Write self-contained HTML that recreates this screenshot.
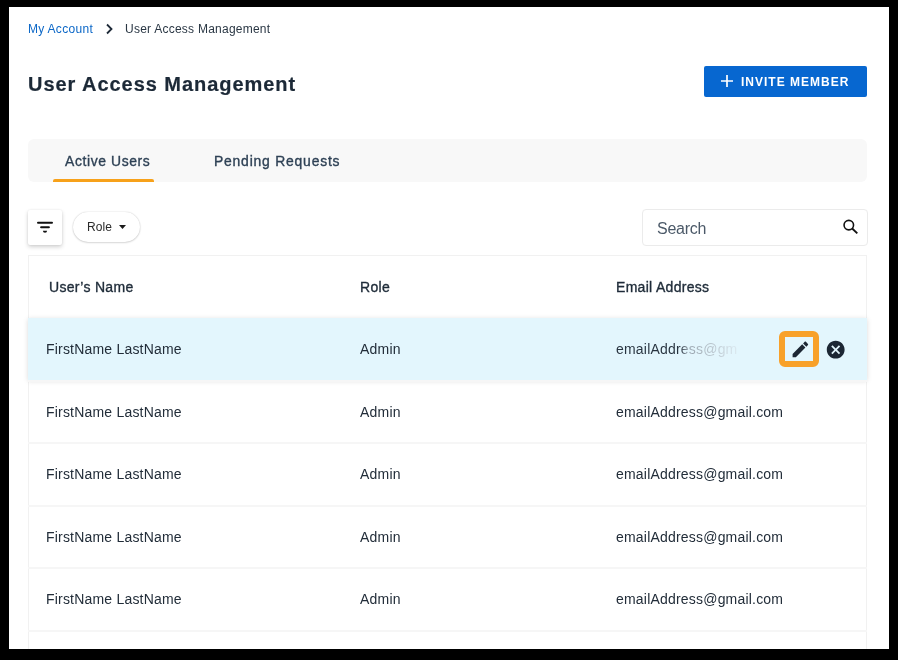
<!DOCTYPE html>
<html>
<head>
<meta charset="utf-8">
<style>
*{box-sizing:border-box;margin:0;padding:0}
html,body{width:898px;height:660px;overflow:hidden;background:#000}
body{font-family:"Liberation Sans",sans-serif;position:relative}
.page{position:absolute;left:9px;top:7px;width:880px;height:642px;background:#fff;overflow:hidden}
.abs{position:absolute;white-space:nowrap}
div.abs:not(:empty){will-change:transform}
.crumb{font-size:12px;color:#0b67c7;left:28px;top:21px;line-height:16px;letter-spacing:0.3px}
.crumb2{font-size:12px;color:#2a3744;left:125px;top:21px;line-height:16px;letter-spacing:0.24px}
.title{font-size:20px;font-weight:bold;color:#1c2937;-webkit-text-stroke:0.2px #1c2937;left:28px;top:73px;line-height:22px;letter-spacing:0.95px}
.btn{left:704px;top:65.8px;width:163px;height:31px;background:#0767d0;border-radius:2px}
.btntxt{font-size:12px;font-weight:bold;color:#fff;left:741px;top:75.8px;line-height:12px;letter-spacing:1px}
.tabs{left:28px;top:138.6px;width:839px;height:43.3px;background:#f8f8f8;border-radius:6px}
.tab{font-size:13.9px;color:#2e4155;line-height:16px;-webkit-text-stroke:0.35px #2e4155;letter-spacing:0.62px}
.uline{left:53px;top:178.5px;width:101px;height:3.5px;background:#f7a11a;border-radius:2px 2px 0 0}
.fbtn{left:28px;top:210px;width:34px;height:35px;background:#fff;border-radius:2px;box-shadow:0 2px 4px rgba(0,0,0,.18),0 0 2px rgba(0,0,0,.08)}
.pill{left:72.5px;top:211.7px;width:67px;height:30.7px;background:#fff;border-radius:16px;box-shadow:0 0 1.5px rgba(0,0,0,.22),0 1px 2px rgba(0,0,0,.12)}
.search{left:642px;top:209px;width:226px;height:37px;border:1px solid #ebebeb;border-radius:4px;background:#fff}
.table{left:27.5px;top:255px;width:839px;height:400px;border:1px solid #f1f1f1}
.row{position:absolute;left:28px;width:839px;height:2px;background:#f6f6f6}
.hl{left:27.5px;top:317.5px;width:839.5px;height:62.2px;background:#e3f6fd;box-shadow:0 1px 5px rgba(0,0,0,.15)}
.th{font-size:14px;color:#1e2b38;line-height:16px;-webkit-text-stroke:0.35px #1e2b38;letter-spacing:0.3px}
.td{font-size:14px;color:#222d39;line-height:16px;letter-spacing:0.2px;margin-top:1px}
</style>
</head>
<body>
<div class="page"></div>
<div class="abs crumb">My Account</div>
<svg class="abs" style="left:105px;top:22.5px" width="9" height="12" viewBox="0 0 9 12"><path d="M2 1.5 L6.5 6 L2 10.5" fill="none" stroke="#1e2a38" stroke-width="1.8"/></svg>
<div class="abs crumb2">User Access Management</div>
<div class="abs title">User Access Management</div>
<div class="abs btn"></div>
<svg class="abs" style="left:721px;top:75.4px" width="12" height="12" viewBox="0 0 12 12"><path d="M6 0V12M0 6H12" stroke="#fff" stroke-width="1.7"/></svg>
<div class="abs btntxt">INVITE MEMBER</div>
<div class="abs tabs"></div>
<div class="abs tab" style="left:65px;top:153.4px">Active Users</div>
<div class="abs tab" style="left:214px;top:153.4px;letter-spacing:0.8px">Pending Requests</div>
<div class="abs uline"></div>
<div class="abs fbtn"></div>
<svg class="abs" style="left:36px;top:220px" width="18" height="14" viewBox="0 0 18 14"><path d="M2 2.8H16M5.1 7.2H12.9" stroke="#111" stroke-width="2" stroke-linecap="round"/><path d="M6.9 10.7H11.1Q11.1 12.7 9 12.7Q6.9 12.7 6.9 10.7Z" fill="#111"/></svg>
<div class="abs pill"></div>
<div class="abs" style="left:87px;top:220.3px;font-size:12px;color:#2a2a2a;line-height:14px;letter-spacing:0.1px">Role</div>
<svg class="abs" style="left:119px;top:225px" width="7" height="4" viewBox="0 0 7 4"><path d="M0 0H7L3.5 4Z" fill="#1a1a1a"/></svg>
<div class="abs search"></div>
<div class="abs" style="left:657px;top:220px;font-size:16px;color:#4b5968;line-height:18px;letter-spacing:-0.25px">Search</div>
<svg class="abs" style="left:842.5px;top:219px" width="16" height="16" viewBox="0 0 16 16"><circle cx="5.8" cy="6.1" r="4.75" fill="none" stroke="#111" stroke-width="1.6"/><path d="M9.2 9.5L14.3 14.4" stroke="#111" stroke-width="1.9"/></svg>
<div class="abs table"></div>
<div class="abs th" style="left:49px;top:279px">User&rsquo;s Name</div>
<div class="abs th" style="left:360px;top:279px">Role</div>
<div class="abs th" style="left:616px;top:279px">Email Address</div>
<div class="abs hl"></div>
<div class="abs td" style="left:46px;top:340px">FirstName LastName</div>
<div class="abs td" style="left:360px;top:340px">Admin</div>
<div class="abs td" style="left:616px;top:340px"><span style="color:transparent;-webkit-background-clip:text;background-clip:text;background-image:linear-gradient(to right,#27333f 0,#27333f 64px,#9aa6b0 72px,#b8c4cc 95px,#dbe9f0 121px)">emailAddress@gm</span></div>
<div class="row" style="top:380px"></div>
<div class="abs td" style="left:46px;top:403px">FirstName LastName</div>
<div class="abs td" style="left:360px;top:403px">Admin</div>
<div class="abs td" style="left:616px;top:403px">emailAddress@gmail.com</div>
<div class="row" style="top:442px"></div>
<div class="abs td" style="left:46px;top:465px">FirstName LastName</div>
<div class="abs td" style="left:360px;top:465px">Admin</div>
<div class="abs td" style="left:616px;top:465px">emailAddress@gmail.com</div>
<div class="row" style="top:505px"></div>
<div class="abs td" style="left:46px;top:528px">FirstName LastName</div>
<div class="abs td" style="left:360px;top:528px">Admin</div>
<div class="abs td" style="left:616px;top:528px">emailAddress@gmail.com</div>
<div class="row" style="top:567px"></div>
<div class="abs td" style="left:46px;top:590px">FirstName LastName</div>
<div class="abs td" style="left:360px;top:590px">Admin</div>
<div class="abs td" style="left:616px;top:590px">emailAddress@gmail.com</div>
<div class="row" style="top:630px"></div>
<div class="abs" style="left:779px;top:331px;width:40px;height:36px;border:6px solid #f8a12a;border-radius:6px"></div>
<svg class="abs" style="left:789.7px;top:339.1px" width="20.8" height="20.8" viewBox="0 0 24 24"><path d="M3 17.25V21h3.75L17.81 9.94l-3.75-3.75L3 17.25zM20.71 7.04c.39-.39.39-1.020 0-1.41l-2.34-2.34c-.39-.39-1.02-.39-1.41 0l-1.83 1.830 3.75 3.75 1.83-1.83z" fill="#1c2734"/></svg>
<svg class="abs" style="left:825px;top:338.6px" width="21.4" height="21.4" viewBox="0 0 24 24"><path d="M12 2C6.47 2 2 6.47 2 12s4.47 10 10 10 10-4.47 10-10S17.53 2 12 2zm5 13.59L15.59 17 12 13.41 8.41 17 7 15.59 10.59 12 7 8.41 8.41 7 12 10.590 15.59 7 17 8.41 13.41 12 17 15.59z" fill="#1c2734"/></svg>

<div class="abs" style="left:0;top:0;width:898px;height:7px;background:#000"></div>
<div class="abs" style="left:0;top:0;width:9px;height:660px;background:#000"></div>
<div class="abs" style="left:889px;top:0;width:9px;height:660px;background:#000"></div>
<div class="abs" style="left:0;top:649px;width:898px;height:11px;background:#000"></div>
</body>
</html>
